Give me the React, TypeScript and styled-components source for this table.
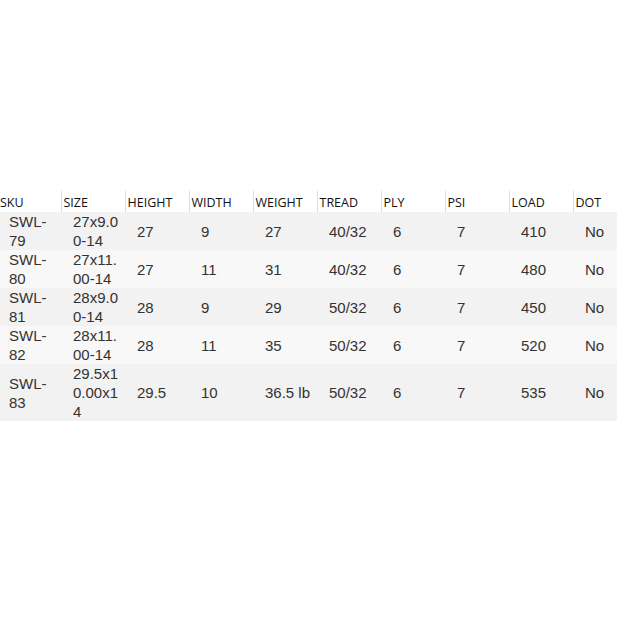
import styled, { createGlobalStyle } from "styled-components";

const GlobalStyle = createGlobalStyle`
  html, body {
    margin: 0;
    padding: 0;
    background: #ffffff;
    overflow: hidden;
  }
`;

const Page = styled.div`
  width: 617px;
  height: 617px;
  padding-top: 191px;
  box-sizing: border-box;
  overflow: hidden;
  background: #ffffff;
`;

const SpecTable = styled.table`
  border-collapse: collapse;
  table-layout: fixed;
  width: 637px;
`;

const HeadCell = styled.th`
  width: 64px;
  height: 21px;
  padding: 2px 0 0 2px;
  border-left: 1px solid #dcdcdc;
  box-sizing: border-box;
  text-align: left;
  vertical-align: middle;
  font-family: "Open Sans", "Noto Sans", sans-serif;
  font-weight: 400;
  font-size: 12.5px;
  color: #111111;
  background: #ffffff;

  &:first-child {
    width: 61px;
    border-left: none;
    padding-left: 0;
  }
`;

const Row = styled.tr<{ $shade: boolean }>`
  background: ${(p) => (p.$shade ? "#f2f2f2" : "#f8f8f8")};
`;

const Cell = styled.td`
  padding: 0 4px 0 12px;
  box-sizing: border-box;
  vertical-align: middle;
  word-break: break-all;
  font-family: "Liberation Sans", Arial, sans-serif;
  font-size: 15px;
  line-height: 19px;
  color: #333333;

  &:first-child {
    padding-left: 9px;
    word-break: normal;
  }
`;

const columns = [
  "SKU",
  "SIZE",
  "HEIGHT",
  "WIDTH",
  "WEIGHT",
  "TREAD",
  "PLY",
  "PSI",
  "LOAD",
  "DOT",
];

const rows = [
  ["SWL-79", "27x9.00-14", "27", "9", "27", "40/32", "6", "7", "410", "No"],
  ["SWL-80", "27x11.00-14", "27", "11", "31", "40/32", "6", "7", "480", "No"],
  ["SWL-81", "28x9.00-14", "28", "9", "29", "50/32", "6", "7", "450", "No"],
  ["SWL-82", "28x11.00-14", "28", "11", "35", "50/32", "6", "7", "520", "No"],
  ["SWL-83", "29.5x10.00x14", "29.5", "10", "36.5 lb", "50/32", "6", "7", "535", "No"],
];

export default function App() {
  return (
    <Page>
      <GlobalStyle />
      <SpecTable>
        <thead>
          <tr>
            {columns.map((c) => (
              <HeadCell key={c}>{c}</HeadCell>
            ))}
          </tr>
        </thead>
        <tbody>
          {rows.map((r, i) => (
            <Row key={r[0]} $shade={i % 2 === 0}>
              {r.map((v, j) => (
                <Cell key={j}>{v}</Cell>
              ))}
            </Row>
          ))}
        </tbody>
      </SpecTable>
    </Page>
  );
}
